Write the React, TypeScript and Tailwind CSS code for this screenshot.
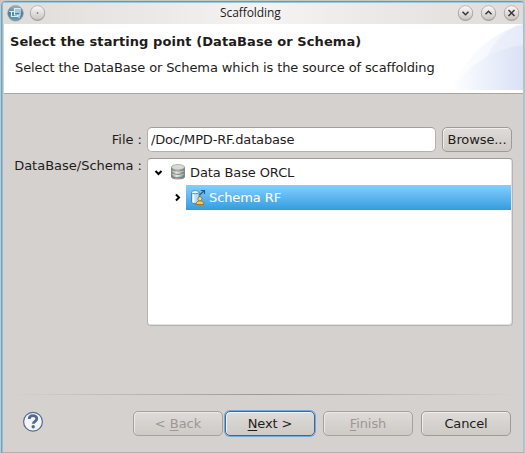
import type { ReactNode } from "react";

function TitleButton({ children }: { children?: ReactNode }) {
  return (
    <svg width="17" height="17" viewBox="0 0 17 17" className="shrink-0">
      <defs>
        <linearGradient id="knob" x1="0" y1="0" x2="0" y2="1">
          <stop offset="0" stopColor="#fafafa" />
          <stop offset="1" stopColor="#c8c4c2" />
        </linearGradient>
      </defs>
      <circle cx="8.5" cy="8.5" r="7.6" fill="#aaa6a4" />
      <circle cx="8.5" cy="7.9" r="7.2" fill="url(#knob)" stroke="#a09c9a" strokeWidth="0.6" />
      {children}
    </svg>
  );
}

function AppIcon() {
  return (
    <svg width="17" height="17" viewBox="0 0 17 17" className="shrink-0">
      <defs>
        <linearGradient id="app" x1="0" y1="0" x2="0" y2="1">
          <stop offset="0" stopColor="#a3b7c2" />
          <stop offset="0.5" stopColor="#457d9a" />
          <stop offset="1" stopColor="#70a2b9" />
        </linearGradient>
      </defs>
      <circle cx="8.5" cy="8.3" r="7.8" fill="url(#app)" stroke="#80949f" strokeWidth="0.6" />
      <path d="M7.5 3.5H13V10H7.5zM2.5 6.5h5M4.5 6.5v5h6V10M12 10v3" fill="none" stroke="#dcecf3" strokeWidth="1.2" />
      <path d="M8 4h4.5v4H8z" fill="#a9c9d8" />
    </svg>
  );
}

function DatabaseIcon() {
  return (
    <svg width="16" height="16" viewBox="0 0 16 16" className="shrink-0">
      <defs>
        <linearGradient id="db" x1="0" y1="0" x2="1" y2="0">
          <stop offset="0" stopColor="#7d827e" />
          <stop offset="0.4" stopColor="#e4e8e3" />
          <stop offset="1" stopColor="#6d736e" />
        </linearGradient>
      </defs>
      <path d="M1.5 3v10c0 2.6 13 2.6 13 0V3z" fill="url(#db)" stroke="#747975" strokeWidth="0.8" />
      <path d="M1.5 5.2c0 2.6 13 2.6 13 0M1.5 8.5c0 2.6 13 2.6 13 0M1.5 11.8c0 2.6 13 2.6 13 0" fill="none" stroke="#777c78" />
      <path d="M1.8 6.3c1 2.2 11.4 2.2 12.4 0M1.8 9.6c1 2.2 11.4 2.2 12.4 0" fill="none" stroke="#edf0ed" strokeWidth="0.6" />
      <ellipse cx="8" cy="3.2" rx="6.5" ry="2.7" fill="#d1dcd7" stroke="#959b97" strokeWidth="0.7" />
      <path d="m5 5 5-4M8 5.5l4-3.8" stroke="#f0d5d2" />
    </svg>
  );
}

function SchemaIcon() {
  return (
    <svg width="16" height="17" viewBox="0 0 16 17" className="shrink-0">
      <path d="M1.5 3.2v9.8c0 2 7.5 2 7.5 0V3.2" fill="#b8defa" stroke="#4c86b4" />
      <path d="M3.5 5v8.5" stroke="#fff" strokeWidth="1.7" />
      <ellipse cx="5.2" cy="3.2" rx="3.7" ry="1.6" fill="#eefaff" stroke="#5794bc" />
      <path d="m9.5 6 5-4.5M10.8 1.5h3.7V5" fill="none" stroke="#28598d" strokeWidth="1.2" />
      <path d="M6 15.5c0-2.4 1.5-3.7 3.9-3.7s3.9 1.3 3.9 3.7z" fill="#f2c860" stroke="#8b6c25" strokeWidth="0.8" />
      <circle cx="9.9" cy="9.8" r="2.1" fill="#f7d98c" stroke="#8b6c25" strokeWidth="0.8" />
    </svg>
  );
}

function DialogButton({ children, className }: { children: ReactNode; className: string }) {
  return (
    <button className={`flex h-[25px] shrink-0 items-center justify-center rounded-[5px] border bg-linear-to-b from-[#dedbd8] to-[#cecac6] ${className}`}>
      <span>{children}</span>
    </button>
  );
}

const normal = "border-[#a09a97] text-[#1f1c1b] shadow-[inset_1px_1px_0_#f0eeed]";
const disabled = "border-[#a6a19e] text-[#9c9794] shadow-[inset_1px_1px_0_#ebe9e7]";

export default function App() {
  return (
    <div className="h-[453px] w-[525px] overflow-hidden bg-[#c9c6c3] pl-px pt-px font-['DejaVu_Sans',sans-serif] text-[13px] leading-4 text-[#1f1c1b]">
      <main className="flex h-[452px] w-[524px] flex-col overflow-hidden rounded-t-[5px] border-b border-l border-r border-t border-b-[#b9acab] border-l-[#65a8ca] border-r-[#a9cbdc] border-t-[#5c9db9] bg-[#d5d1ce] pl-[2px] pr-px shadow-[inset_1px_0_#8fbdd3,inset_-1px_0_#b8bdc0]">
        <header className="-ml-px flex h-[22px] shrink-0 items-center border-t border-[#8fcce8] bg-linear-to-r from-[#dfdbd9] via-[#f5f4f3] to-[#dfdbd9] pl-[4px] pr-[3px]">
          <AppIcon />
          <div className="ml-[5px] flex">
            <TitleButton><circle cx="8.5" cy="8" r="0.8" fill="#5f5b59" /></TitleButton>
          </div>
          <h1 className="ml-[174px] w-[64px] whitespace-nowrap pb-px font-['Open_Sans',sans-serif] text-[12px] leading-[18px] tracking-[-0.08px]">Scaffolding</h1>
          <div className="ml-auto flex gap-[6px]">
            <TitleButton><path d="m5.5 6.8 3 3 3-3" fill="none" stroke="#383533" strokeWidth="1.5" /></TitleButton>
            <TitleButton><path d="m5.5 9.3 3-3 3 3" fill="none" stroke="#383533" strokeWidth="1.5" /></TitleButton>
            <TitleButton><path d="m5.5 5 6 6m0-6-6 6" fill="none" stroke="#383533" strokeWidth="1.5" /></TitleButton>
          </div>
        </header>
        <section className="relative h-[70px] shrink-0 border-b border-[#aaa6a3] bg-white">
          <svg width="72" height="66" viewBox="0 0 72 66" className="absolute right-0 top-0">
            <defs>
              <linearGradient id="waveA" x1="0" y1="0.5" x2="1" y2="0.5"><stop stopColor="#fff" /><stop offset="0.5" stopColor="#f6f8fd" /><stop offset="1" stopColor="#edf1fb" /></linearGradient>
              <linearGradient id="waveB" x1="0" y1="0.5" x2="1" y2="0.5"><stop stopColor="#eef2fb" /><stop offset="1" stopColor="#e6ebf9" /></linearGradient>
              <linearGradient id="waveC" x1="0" y1="0.5" x2="1" y2="0.5"><stop stopColor="#fff" /><stop offset="0.5" stopColor="#ebf0fb" /><stop offset="1" stopColor="#dae1f5" /></linearGradient>
            </defs>
            <path d="M0 66C12 38 36 10 72 0v66z" fill="url(#waveA)" />
            <path d="M34 37C42 18 54 5 72 0v40H34z" fill="url(#waveB)" />
            <path d="M0 66C16 44 38 25 72 21v45z" fill="url(#waveC)" />
          </svg>
          <div className="relative whitespace-nowrap pl-[6px] pt-[10px]">
            <h2 className="font-bold leading-4 tracking-[0.075px]">Select the starting point (DataBase or Schema)</h2>
            <p className="ml-[5px] mt-[10px] tracking-[-0.12px]">Select the DataBase or Schema which is the source of scaffolding</p>
          </div>
        </section>
        <section className="flex shrink-0 flex-col gap-[6px] pl-2 pr-[8px] pt-[33px]">
          <div className="flex h-[25px] items-center">
            <label className="w-[130px] text-right">File :</label>
            <input readOnly value="/Doc/MPD-RF.database" className="ml-[5px] h-[25px] w-[289px] rounded-[5px] border border-[#b5b0ad] border-t-[#a39e9b] bg-white px-[3px] tracking-[-0.16px] outline-none" />
            <DialogButton className={`ml-[6px] w-[70px] tracking-[-0.1px] ${normal}`}>Browse...</DialogButton>
          </div>
          <div className="flex items-start">
            <label className="w-[130px] whitespace-nowrap text-right">DataBase/Schema :</label>
            <div className="ml-[5px] h-[168px] w-[366px] shrink-0 rounded-[4px] border border-[#b7b3b0] border-t-[#a19c99] bg-white pr-px pt-px shadow-[inset_-1px_-1px_#e4e2e1]">
              <div className="flex h-[25px] items-center pl-[6px]">
                <svg width="9" height="9" viewBox="0 0 9 9"><path d="m1.5 3 3 3 3-3" fill="none" stroke="#000" strokeWidth="2" /></svg>
                <div className="ml-[7px] pb-px"><DatabaseIcon /></div>
                <span className="ml-[4px] tracking-[-0.12px]">Data Base ORCL</span>
              </div>
              <div className="flex h-[25px] items-center pl-[25px]">
                <svg width="9" height="9" viewBox="0 0 9 9"><path d="m3 1.5 3 3-3 3" fill="none" stroke="#000" strokeWidth="2" /></svg>
                <div className="ml-[4px] flex h-[25px] flex-1 items-center bg-linear-to-b from-[#82cfff] to-[#319ddd] pl-[4px] text-white">
                  <SchemaIcon />
                  <span className="ml-[3px] tracking-[-0.1px]">Schema RF</span>
                </div>
              </div>
            </div>
          </div>
        </section>
        <footer className="mt-auto shrink-0">
          <div className="mx-[8px] h-px bg-linear-to-r from-transparent via-[#9e9996] to-transparent" />
          <div className="flex h-[57px] items-start pl-[19px] pt-[16px]">
            <svg width="21" height="21" viewBox="0 0 21 21" className="shrink-0">
              <circle cx="10" cy="10.7" r="9.4" fill="#f4f5f7" stroke="#576b93" strokeWidth="1.2" />
              <path d="M6.2 8C6.2 3.5 13.8 3.7 13.8 7.8c0 2.6-3.5 2.5-3.5 5" fill="none" stroke="#536892" strokeWidth="2.8" />
              <circle cx="10.2" cy="15.8" r="1.7" fill="#536892" />
            </svg>
            <DialogButton className={`ml-[89px] w-[90px] ${disabled}`}>&lt; <u className="underline-offset-2">B</u>ack</DialogButton>
            <DialogButton className="ml-[2px] w-[90px] border-[#356ba4] text-[#1f1c1b] shadow-[0_0_0_1px_#75a9d8,inset_1px_1px_#edf3f7]"><span className="tracking-[-0.1px]"><u className="underline-offset-2">N</u>ext &gt;</span></DialogButton>
            <DialogButton className={`ml-[8px] w-[90px] tracking-[-0.1px] ${disabled}`}><u className="underline-offset-2">F</u>inish</DialogButton>
            <DialogButton className={`ml-[8px] w-[90px] tracking-[-0.15px] ${normal}`}>Cancel</DialogButton>
          </div>
        </footer>
      </main>
    </div>
  );
}
